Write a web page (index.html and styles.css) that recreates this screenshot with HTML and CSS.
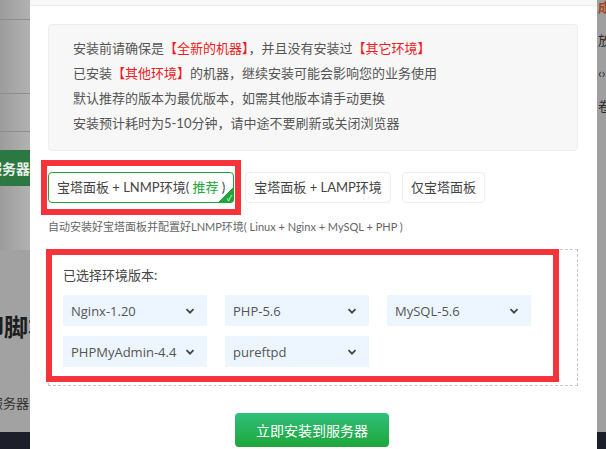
FILE: index.html
```html
<!DOCTYPE html>
<html lang="zh-CN">
<head>
  <meta charset="UTF-8" />
  <meta name="viewport" content="width=device-width, initial-scale=1.0"/>
  <title>安装推荐环境</title>
  <link rel="stylesheet" href="styles.css">
</head>
<body>

  <!-- dimmed page behind the dialog -->
  <aside class="page-left">
    <div class="pl-row"></div>
    <div class="pl-row tall"></div>
    <div class="pl-row mid"></div>
    <div class="pl-gap"></div>
    <div class="pl-green"><span>服务器</span></div>
    <div class="pl-lower">
      <div class="pl-title"><span>卸脚本</span></div>
      <div class="pl-text"><span>服务器</span></div>
    </div>
    <div class="pl-footer"></div>
  </aside>

  <section class="modal">
    <div class="modal-top"></div>
    <div class="modal-body">

      <div class="notice">
        <p>安装前请确保是<em>【全新的机器】</em>，并且没有安装过<em>【其它环境】</em></p>
        <p>已安装<em>【其他环境】</em>的机器，继续安装可能会影响您的业务使用</p>
        <p>默认推荐的版本为最优版本，如需其他版本请手动更换</p>
        <p>安装预计耗时为5-10分钟，请中途不要刷新或关闭浏览器</p>
      </div>

      <div class="plan-list">
        <div class="plan active">
          宝塔面板 + LNMP环境( <span class="hot">推荐</span> )
          <span class="corner">✓</span>
          <span class="mark mark-plan"></span>
        </div>
        <div class="plan">宝塔面板 + LAMP环境</div>
        <div class="plan">仅宝塔面板</div>
      </div>
      <p class="plan-desc">自动安装好宝塔面板并配置好LNMP环境( Linux + Nginx + MySQL + PHP )</p>

      <div class="versions">
        <span class="mark mark-versions"></span>
        <div class="versions-label">已选择环境版本:</div>
        <div class="select-grid">
          <div class="select">Nginx-1.20 <svg viewBox="0 0 10 10"><path d="M1.5 3.2 5 6.7 8.5 3.2" /></svg></div>
          <div class="select">PHP-5.6 <svg viewBox="0 0 10 10"><path d="M1.5 3.2 5 6.7 8.5 3.2" /></svg></div>
          <div class="select">MySQL-5.6 <svg viewBox="0 0 10 10"><path d="M1.5 3.2 5 6.7 8.5 3.2" /></svg></div>
          <div class="select">PHPMyAdmin-4.4 <svg viewBox="0 0 10 10"><path d="M1.5 3.2 5 6.7 8.5 3.2" /></svg></div>
          <div class="select">pureftpd <svg viewBox="0 0 10 10"><path d="M1.5 3.2 5 6.7 8.5 3.2" /></svg></div>
        </div>
      </div>

      <div class="actions">
        <button class="btn-install">立即安装到服务器</button>
      </div>
    </div>
  </section>

  <aside class="page-right">
    <div class="pr-line red">成</div>
    <div class="pr-line">放</div>
    <div class="pr-line">‹›</div>
    <div class="pr-line">卷</div>
    <div class="pr-fill"></div>
    <div class="pl-footer"></div>
  </aside>

</body>
</html>
```

FILE: styles.css
```css
* {
  margin: 0;
  padding: 0;
  box-sizing: border-box;
}

body {
  display: flex;
  height: 449px;
  overflow: hidden;
  font-family: "Microsoft YaHei", Lato, "Noto Sans CJK SC", sans-serif;
  color: #555;
  background-color: #a5a5a5;
}

/* ---- page behind the overlay ---- */
.page-left {
  width: 30px;
  flex-shrink: 0;
  display: flex;
  flex-direction: column;
  background: linear-gradient(90deg, #9c9c9c, #b2b2b2);
  overflow: hidden;
}

.pl-row {
  height: 20px;
  border-bottom: 1px solid #8d8d8d;
}

.pl-row.tall {
  height: 74px;
}

.pl-row.mid {
  height: 38px;
}

.pl-gap {
  height: 18px;
}

.pl-green {
  height: 36px;
  background-color: #2c7843;
  color: #e8efe9;
  font-size: 14px;
  font-weight: bold;
  display: flex;
  align-items: center;
  justify-content: flex-end;
  white-space: nowrap;
}

.pl-lower {
  flex: 1;
  margin-top: 64px;
  background-color: #a2a2a2;
  display: flex;
  flex-direction: column;
}

.pl-title {
  margin-top: 58px;
  font-size: 24px;
  font-weight: bold;
  color: #1d1d1d;
  white-space: nowrap;
  display: flex;
  justify-content: flex-end;
}

.pl-title span {
  margin-right: -22px;
}

.pl-text {
  margin-top: 50px;
  font-size: 13px;
  color: #333;
  white-space: nowrap;
  display: flex;
  justify-content: flex-end;
}

.pl-text span {
  margin-right: 1px;
}

.pl-footer {
  height: 17px;
  background-color: #1c1e29;
}

.page-right {
  flex: 1;
  display: flex;
  flex-direction: column;
  background-color: #9f9f9f;
  overflow: hidden;
  font-size: 13px;
  color: #2b2b2b;
  white-space: nowrap;
}

.pr-line {
  height: 33px;
  line-height: 18px;
  padding-left: 1px;
}

.pr-line.red {
  color: #a8431f;
  font-weight: bold;
  margin-top: -2px;
}

.pr-fill {
  flex: 1;
}

/* ---- dialog ---- */
.modal {
  width: 567px;
  flex-shrink: 0;
  background-color: #fff;
}

.modal-top {
  height: 6px;
  background-color: #f7f7f7;
  border-bottom: 1px solid #ececec;
}

.modal-body {
  position: relative;
  padding: 18px 19px 0 18px;
}

.notice {
  background-color: #f7f7f7;
  border: 1px solid #eee;
  border-radius: 4px;
  padding: 11px 24px 14px;
  font-size: 13px;
  line-height: 25px;
  color: #555;
}

.notice em {
  font-style: normal;
  color: #ed1c24;
}

.plan-list {
  display: flex;
  gap: 11px;
  margin-top: 21px;
}

.plan {
  position: relative;
  height: 31px;
  padding: 0 8px;
  border: 1px solid #eee;
  border-radius: 4px;
  font-size: 13px;
  line-height: 29px;
  color: #444;
  white-space: nowrap;
}

.plan.active {
  border-color: #20a53a;
}

.hot {
  color: #20a53a;
}

.corner {
  position: absolute;
  right: -1px;
  bottom: -1px;
  width: 16px;
  height: 16px;
  background: linear-gradient(135deg, transparent 50%, #20a53a 50%);
  border-bottom-right-radius: 4px;
  color: #fff;
  font-size: 8px;
  line-height: 9px;
  text-align: right;
  padding-top: 7px;
  padding-right: 2px;
}

.plan-desc {
  margin-top: 17px;
  font-size: 11px;
  color: #666;
  line-height: 14px;
}

.versions {
  position: relative;
  margin-top: 15px;
  border: 1px dashed #c8c8c8;
  padding: 16px 14px 18px;
}

.versions-label {
  font-size: 13px;
  line-height: 18px;
  color: #444;
}

.select-grid {
  display: grid;
  grid-template-columns: repeat(3, 144px);
  column-gap: 18px;
  row-gap: 10px;
  margin-top: 11px;
}

.select {
  height: 31px;
  background-color: #edf5fe;
  display: flex;
  align-items: center;
  justify-content: space-between;
  padding: 0 12px 0 8px;
  font-family: "Open Sans", "Noto Sans CJK SC", sans-serif;
  font-size: 13px;
  color: #555;
}

.select svg {
  width: 10px;
  height: 10px;
  fill: none;
  stroke: #444;
  stroke-width: 1.8;
}

.actions {
  display: flex;
  justify-content: center;
  margin-top: 27px;
  padding-right: 2px;
}

.btn-install {
  width: 154px;
  height: 34px;
  border: none;
  border-radius: 4px;
  background: linear-gradient(180deg, #2fc07b, #20a53a);
  color: #fff;
  font-family: inherit;
  font-size: 14px;
}

/* red annotation frames drawn over the screenshot */
.mark {
  position: absolute;
  border: 6px solid #f5333b;
  pointer-events: none;
}

.mark-plan {
  left: -8px;
  right: -8px;
  top: -13px;
  bottom: -13px;
}

.mark-versions {
  left: -3px;
  right: 18px;
  top: -1px;
  bottom: 3px;
}
```
